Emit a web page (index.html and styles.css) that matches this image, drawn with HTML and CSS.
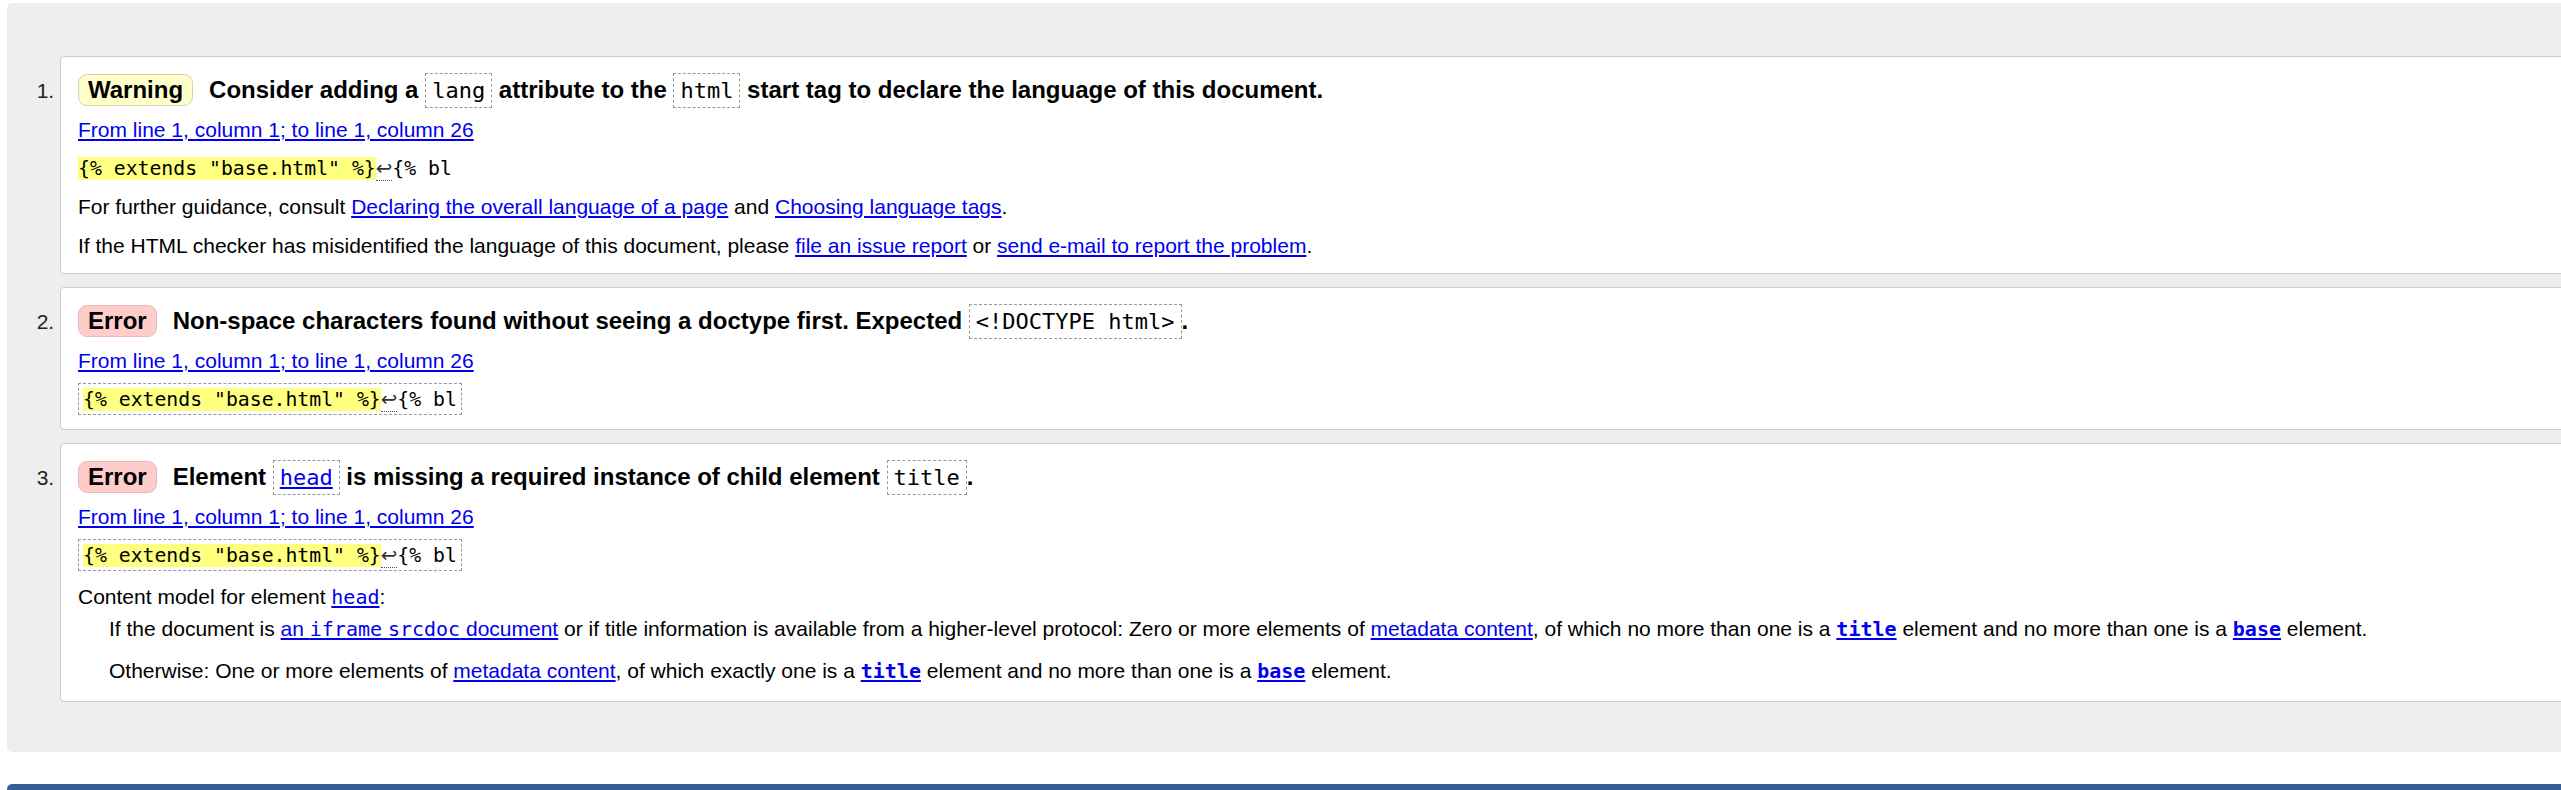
FILE: index.html
```html
<!DOCTYPE html>
<html lang="en">
<head>
<meta charset="utf-8">
<title>Nu Html Checker results</title>
<link rel="stylesheet" href="styles.css">
</head>
<body>
<div class="results">
  <ol class="msgs">
    <li class="msg warning">
      <p class="title"><strong class="badge">Warning</strong><span>Consider adding a <code class="box">lang</code> attribute to the <code class="box">html</code> start tag to declare the language of this document.</span></p>
      <p class="loc"><a href="#">From line 1, column 1; to line 1, column 26</a></p>
      <p class="extract"><code><b>{% extends "base.html" %}</b><abbr title="U+000A">↩</abbr>{% bl</code></p>
      <p>For further guidance, consult <a href="#">Declaring the overall language of a page</a> and <a href="#">Choosing language tags</a>.</p>
      <p>If the HTML checker has misidentified the language of this document, please <a href="#">file an issue report</a> or <a href="#">send e-mail to report the problem</a>.</p>
    </li>
    <li class="msg error">
      <p class="title"><strong class="badge">Error</strong><span>Non-space characters found without seeing a doctype first. Expected <code class="box">&lt;!DOCTYPE html&gt;</code>.</span></p>
      <p class="loc"><a href="#">From line 1, column 1; to line 1, column 26</a></p>
      <p class="extract"><code><b>{% extends "base.html" %}</b><abbr title="U+000A">↩</abbr>{% bl</code></p>
    </li>
    <li class="msg error">
      <p class="title"><strong class="badge">Error</strong><span>Element <code class="box"><a href="#">head</a></code> is missing a required instance of child element <code class="box">title</code>.</span></p>
      <p class="loc"><a href="#">From line 1, column 1; to line 1, column 26</a></p>
      <p class="extract"><code><b>{% extends "base.html" %}</b><abbr title="U+000A">↩</abbr>{% bl</code></p>
      <dl class="cm">
        <dt>Content model for element <a href="#"><code>head</code></a>:</dt>
        <dd>If the document is <a href="#">an <code>iframe</code> <code>srcdoc</code> document</a> or if title information is available from a higher-level protocol: Zero or more elements of <a href="#">metadata content</a>, of which no more than one is a <a href="#"><code class="strong">title</code></a> element and no more than one is a <a href="#"><code class="strong">base</code></a> element.</dd>
        <dd>Otherwise: One or more elements of <a href="#">metadata content</a>, of which exactly one is a <a href="#"><code class="strong">title</code></a> element and no more than one is a <a href="#"><code class="strong">base</code></a> element.</dd>
      </dl>
    </li>
  </ol>
</div>
<div class="footer"></div>
</body>
</html>
```
FILE: styles.css
```css
html {
  overflow: hidden;
  background: #fff;
}

body {
  margin: 3px 0 0 7px;
  font-family: "Liberation Sans", Arial, sans-serif;
  font-size: 21px;
  color: #000;
}

a {
  color: #0000ee;
}

code {
  font-family: "DejaVu Sans Mono", monospace;
}

.results {
  background: #eeeeee;
  border-radius: 5px;
  padding: 53px 0 50px 53px;
  margin-right: -60px;
}

.msgs {
  margin: 0;
  padding: 0;
  list-style: decimal outside;
}

.msg {
  background: #fff;
  border: 1px solid #cccccc;
  border-radius: 4px;
  padding: 16px 17px 14px 17px;
}

.msg + .msg {
  margin-top: 13px;
}

.msg::marker {
  color: #222;
}

.msg p {
  margin: 0;
  line-height: 26px;
}

.msg .title {
  height: 32px;
  line-height: 32px;
  margin-bottom: 12px;
  font-size: 24px;
  font-weight: bold;
  white-space: nowrap;
}

.badge {
  display: inline-block;
  line-height: 30px;
  padding: 0 9px;
  border: 1px solid #d6d3a6;
  border-radius: 9px;
  background: #ffffcc;
  margin-right: 16px;
}

.error .badge {
  background: #ffcccc;
  border-color: #e6b9b9;
}

.title .box {
  display: inline-block;
  font-size: 22px;
  font-weight: normal;
  line-height: 33px;
  padding: 0 6px;
  border: 1px dashed #999;
}

.msg .loc {
  height: 26px;
  margin-bottom: 9px;
}

.msg .extract {
  display: block;
  width: fit-content;
  height: 26px;
  padding: 2px 4px;
  border: 1px dashed #999;
  margin-bottom: 10px;
  white-space: pre;
}

.warning .extract {
  border: 0;
  padding: 3px 0;
}

.error .extract {
  margin-bottom: 0;
}

.extract code {
  font-size: 19.8px;
}

.extract b {
  font-weight: normal;
  background: #ffff80;
}

.extract abbr {
  font-family: "DejaVu Sans", sans-serif;
  line-height: 1;
  text-decoration: none;
  border-bottom: 1px dotted #555;
  color: #333;
}

.warning .extract + p {
  margin-bottom: 13px;
}

.cm {
  margin: 13px 0 3px;
  line-height: 26px;
}

.cm dd {
  margin: 6px 0 0 31px;
}

.cm dd + dd {
  margin-top: 16px;
}

.cm code {
  font-size: 20px;
}

.cm code.strong {
  font-weight: bold;
}

.footer {
  margin-top: 32px;
  height: 40px;
  background: #365d95;
  border-radius: 5px 5px 0 0;
  margin-right: -60px;
}
```
